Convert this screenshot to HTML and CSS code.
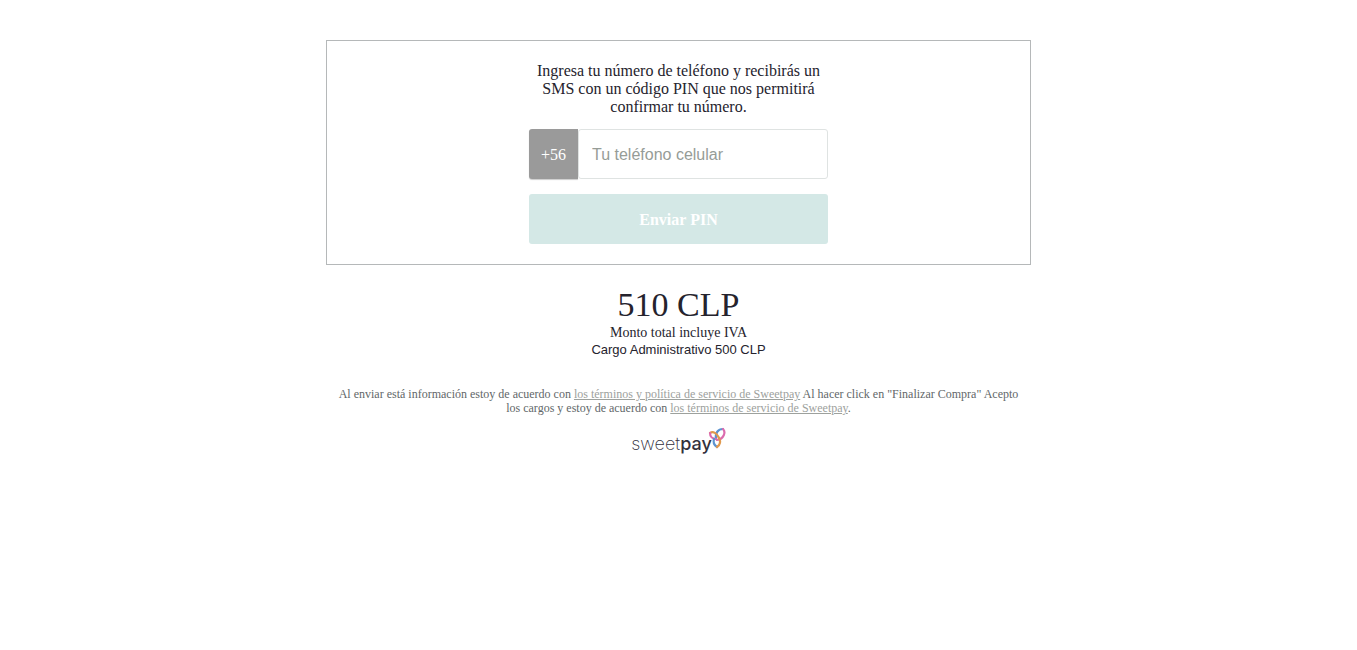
FILE: index.html
```
<!DOCTYPE html>
<html lang="es">
<head>
  <meta charset="UTF-8" />
  <meta name="viewport" content="width=device-width, initial-scale=1.0"/>
  <title>Sweetpay</title>
  <link rel="stylesheet" href="styles.css">
</head>
<body>

  <main class="checkout">
    <form class="panel">
      <div class="panel-content">
        <label class="intro" for="phone">Ingresa tu número de teléfono y recibirás un SMS con un código PIN que nos permitirá confirmar tu número.</label>
        <div class="phone-field">
          <span class="prefix">+56</span>
          <input type="tel" id="phone" placeholder="Tu teléfono celular" />
        </div>
        <button type="submit" class="send-btn" disabled>Enviar PIN</button>
      </div>
    </form>

    <section class="amount">
      <h1>510 CLP</h1>
      <p>Monto total incluye IVA</p>
      <p class="fee">Cargo Administrativo 500 CLP</p>
    </section>

    <footer>
      <p class="terms">
        Al enviar está información estoy de acuerdo con <a href="#">los términos y política de servicio de Sweetpay</a>
        Al hacer click en "Finalizar Compra" Acepto los cargos y estoy de acuerdo con <a href="#">los términos de servicio de Sweetpay</a>.
      </p>
      <div class="logo">
        <span class="sweet">sweet</span><span class="pay">pay</span>
        <svg width="18" height="22" viewBox="0 0 18 22" fill="none" stroke-width="2.2" stroke-linecap="round">
          <path stroke="#5c93cf" d="M8 12C7 6 10 2 15 2"/>
          <path stroke="#dc6cae" d="M15 2C18 5 16 12 9 13"/>
          <path stroke="#e0994e" d="M2 6C5 4 9 6 11 11"/>
          <path stroke="#dc6cae" d="M2 6C2 9 4 12 8 12"/>
          <path stroke="#5c93cf" d="M6 12C5 15 6 18 9 20"/>
          <path stroke="#e0994e" d="M9 20C12 18 13 15 11 11"/>
        </svg>
      </div>
    </footer>
  </main>

</body>
</html>
```

FILE: styles.css
```
* {
  box-sizing: border-box;
}

body {
  margin: 0;
  font-family: "Liberation Serif", "Times New Roman", serif;
  background: #fff;
  color: #25232d;
}

p, h1 {
  margin: 0;
}

.checkout {
  width: 52%;
  min-width: 320px;
  margin: 40px auto 0;
  text-align: center;
}

.panel {
  border: 1px solid #b5b8b9;
  padding: 21px 10px 20px;
}

.panel-content {
  max-width: 299px;
  margin: 0 auto;
}

.intro {
  display: block;
  padding: 0 8px;
  font-size: 16px;
  line-height: 18px;
}

.phone-field {
  display: flex;
  height: 50px;
  margin: 13px 0 15px;
}

.prefix {
  width: 49px;
  line-height: 52px;
  font-size: 16px;
  color: #fff;
  background: #9a9a9a;
  border-radius: 3px 0 0 3px;
  box-shadow: 0 1px 1px rgba(0, 0, 0, 0.2);
}

.phone-field input {
  flex: 1;
  min-width: 0;
  padding: 2px 13px 0;
  border: 1px solid #dfe3e2;
  border-radius: 3px;
  font-family: "Liberation Sans", Arial, sans-serif;
  font-size: 16px;
}

.phone-field input::placeholder {
  color: #969c97;
}

.send-btn {
  display: block;
  width: 100%;
  height: 50px;
  padding: 2px 0 0;
  border: none;
  border-radius: 3px;
  background: #d4e8e6;
  color: #fff;
  font-family: inherit;
  font-size: 16px;
  font-weight: bold;
}

.amount {
  margin-top: 20px;
  font-size: 14px;
  line-height: 17px;
}

.amount h1 {
  font-size: 34px;
  font-weight: normal;
  line-height: 39px;
}

.amount .fee {
  font-family: "Liberation Sans", Arial, sans-serif;
  font-size: 13px;
}

.terms {
  margin-top: 29px;
  padding: 0 10px;
  font-size: 12px;
  line-height: 14px;
  color: #626769;
}

.terms a {
  color: #9da19d;
}

.logo {
  display: flex;
  justify-content: center;
  margin-top: 12px;
  font-family: Inter, sans-serif;
  font-size: 18px;
  line-height: 34px;
  color: #33313d;
}

.sweet {
  font-weight: 200;
}

.pay {
  font-weight: 500;
}

.logo svg {
  margin-left: -4px;
}
```
